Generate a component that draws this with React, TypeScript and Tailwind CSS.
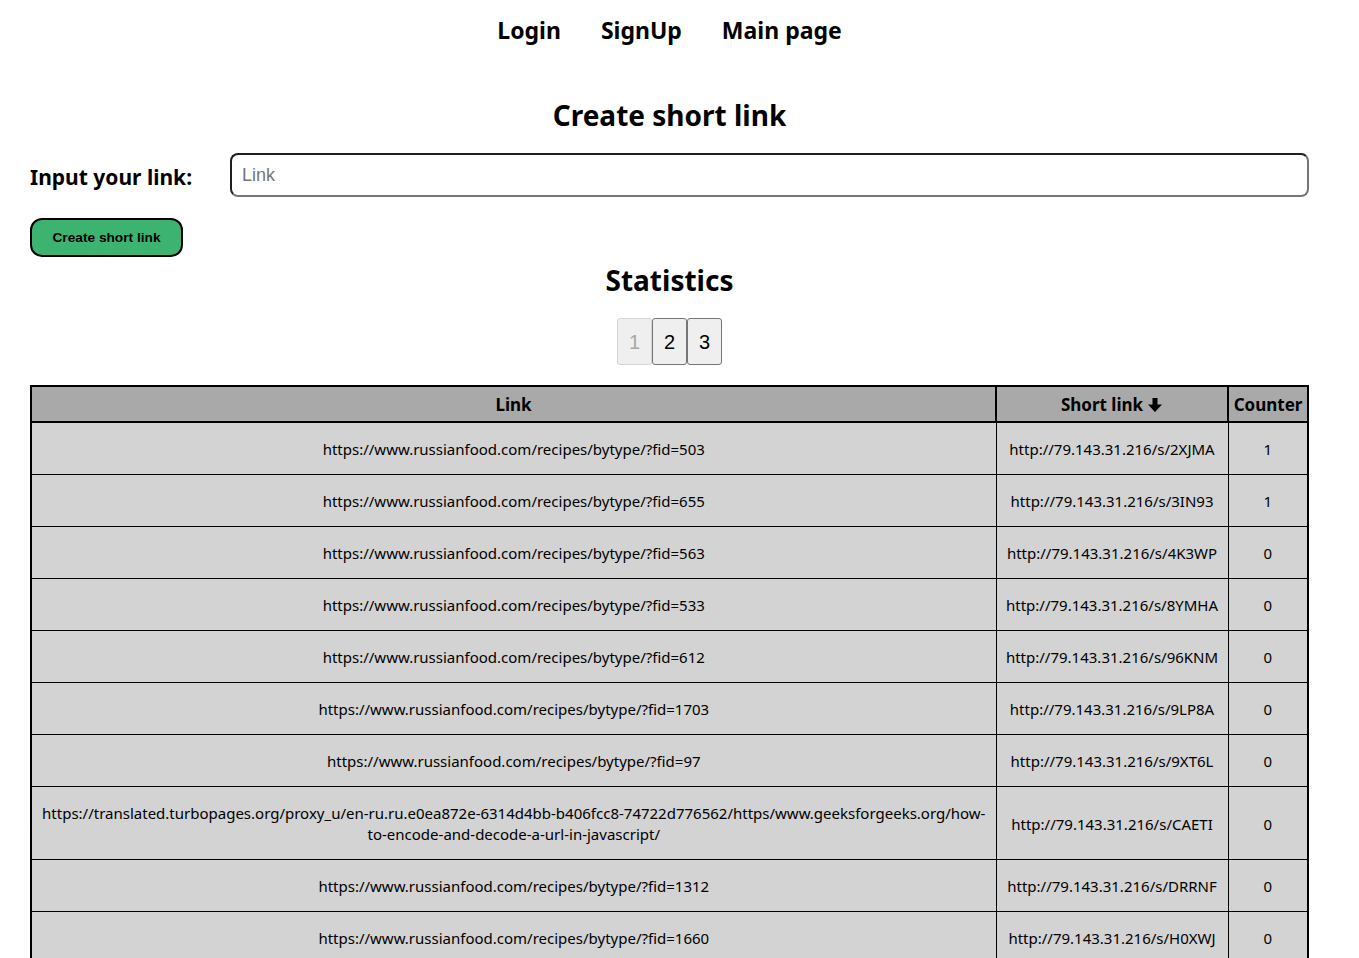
import React from "react";

const rows: [string, string, string][] = [
  ["https://www.russianfood.com/recipes/bytype/?fid=503", "http://79.143.31.216/s/2XJMA", "1"],
  ["https://www.russianfood.com/recipes/bytype/?fid=655", "http://79.143.31.216/s/3IN93", "1"],
  ["https://www.russianfood.com/recipes/bytype/?fid=563", "http://79.143.31.216/s/4K3WP", "0"],
  ["https://www.russianfood.com/recipes/bytype/?fid=533", "http://79.143.31.216/s/8YMHA", "0"],
  ["https://www.russianfood.com/recipes/bytype/?fid=612", "http://79.143.31.216/s/96KNM", "0"],
  ["https://www.russianfood.com/recipes/bytype/?fid=1703", "http://79.143.31.216/s/9LP8A", "0"],
  ["https://www.russianfood.com/recipes/bytype/?fid=97", "http://79.143.31.216/s/9XT6L", "0"],
  [
    "https://translated.turbopages.org/proxy_u/en-ru.ru.e0ea872e-6314d4bb-b406fcc8-74722d776562/https/www.geeksforgeeks.org/how-to-encode-and-decode-a-url-in-javascript/",
    "http://79.143.31.216/s/CAETI",
    "0",
  ],
  ["https://www.russianfood.com/recipes/bytype/?fid=1312", "http://79.143.31.216/s/DRRNF", "0"],
  ["https://www.russianfood.com/recipes/bytype/?fid=1660", "http://79.143.31.216/s/H0XWJ", "0"],
];

function DownArrow() {
  return (
    <svg viewBox="0 0 16 16" className="h-[16px] w-[16px]" fill="currentColor">
      <rect x="5.5" y="1" width="5" height="8" />
      <polygon points="1,7.5 15,7.5 8,15" />
    </svg>
  );
}

export default function App() {
  return (
    <div className="min-h-screen bg-white text-black font-['Noto_Sans',sans-serif]">
      <div className="ml-[30px] w-[1279px]">
        <nav className="flex h-[60px] items-center justify-center gap-[40px] text-[23px] font-bold leading-[32px]">
          <a className="cursor-pointer">Login</a>
          <a className="cursor-pointer">SignUp</a>
          <a className="cursor-pointer">Main page</a>
        </nav>

        <h2 className="mt-[35px] text-center text-[28px] font-bold leading-[40px]">Create short link</h2>

        <div className="mt-[18px] flex h-[44px] items-center">
          <label className="w-[200px] pt-[3px] text-[21px] font-bold leading-[30px]">Input your link:</label>
          <input
            placeholder="Link"
            className="h-[44px] flex-1 rounded-[8px] border-2 border-[#767676] border-t-[#1f1f1f] border-l-[#1f1f1f] px-[10px] font-['Liberation_Sans',Arial,sans-serif] text-[18px] placeholder:text-[#757575] outline-none"
          />
        </div>

        <button className="mt-[21px] h-[39px] w-[153px] rounded-[12px] border-2 border-black bg-[#3cb371] pt-[2px] font-['Liberation_Sans',Arial,sans-serif] text-[13.7px] font-bold">
          Create short link
        </button>

        <h2 className="mt-[3px] text-center text-[28px] font-bold leading-[40px]">Statistics</h2>

        <div className="mt-[18px] flex justify-center font-['Liberation_Sans',Arial,sans-serif] text-[20px]">
          <button disabled className="h-[47px] w-[35px] rounded-[3px] border border-[#d4d4d4] bg-[#efefef] text-[#a8a8a8]">
            1
          </button>
          <button className="h-[47px] w-[35px] rounded-[3px] border border-[#767676] bg-[#efefef]">2</button>
          <button className="h-[47px] w-[35px] rounded-[3px] border border-[#767676] bg-[#efefef]">3</button>
        </div>

        <table className="mt-[20px] w-[1279px] border-collapse border-2 border-black text-center">
          <thead>
            <tr className="bg-[#a9a9a9] text-[17px] font-bold leading-[24px]">
              <th className="w-[967px] border-2 border-black pt-[6px] pb-[4px]">Link</th>
              <th className="w-[232px] border-2 border-black pt-[6px] pb-[4px]">
                <span className="inline-flex items-center gap-[4px]">
                  Short link <DownArrow />
                </span>
              </th>
              <th className="w-[80px] border-2 border-black pt-[6px] pb-[4px]">Counter</th>
            </tr>
          </thead>
          <tbody className="text-[15px] leading-[21px]">
            {rows.map((r, i) => (
              <tr key={i} className="bg-[#d3d3d3]">
                <td className="border border-black px-[10px] pt-[16px] pb-[14px]">{r[0]}</td>
                <td className="border border-black px-[8px] pt-[16px] pb-[14px]">{r[1]}</td>
                <td className="border border-black px-[8px] pt-[16px] pb-[14px]">{r[2]}</td>
              </tr>
            ))}
          </tbody>
        </table>
      </div>
    </div>
  );
}
